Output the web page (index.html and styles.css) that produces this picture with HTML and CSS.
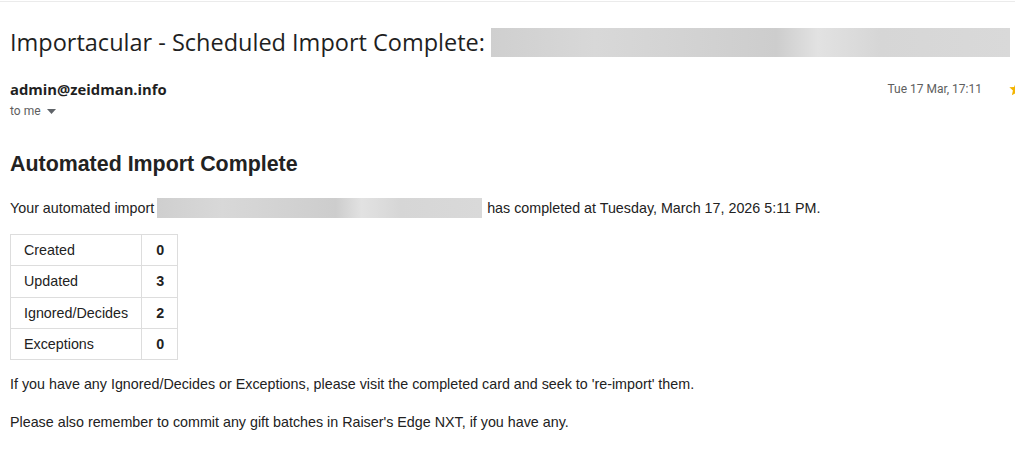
FILE: index.html
```html
<!DOCTYPE html>
<html>
<head>
<meta charset="utf-8">
<link rel="stylesheet" href="styles.css">
</head>
<body>
<div class="topline"></div>
<div class="subject">
  <h1 class="subject-text">Importacular - Scheduled Import Complete:</h1>
  <div class="redact redact-subject"></div>
</div>
<div class="sender-row">
  <div class="sender">
    <div class="from">admin@zeidman.info</div>
    <div class="tome">to me <svg class="caret" width="9" height="5" viewBox="0 0 9 5"><path d="M0 0h9L4.5 5z" fill="#5f6368"/></svg></div>
  </div>
  <div class="meta">
    <span class="date">Tue 17 Mar, 17:11</span>
    <svg class="star" width="16" height="16" viewBox="0 0 24 24"><path d="M12 2l2.9 6.9 7.1.6-5.4 4.7 1.6 7.3L12 17.8 5.8 21.5l1.6-7.3L2 9.5l7.1-.6z" fill="#f4b400"/></svg>
  </div>
</div>
<div class="mail">
  <h2 class="mail-title">Automated Import Complete</h2>
  <p class="line first">Your automated import<span class="redact redact-inline"></span>has completed at Tuesday, March 17, 2026 5:11 PM.</p>
  <table class="stats">
    <tr><td class="label">Created</td><td class="num">0</td></tr>
    <tr><td class="label">Updated</td><td class="num">3</td></tr>
    <tr><td class="label">Ignored/Decides</td><td class="num">2</td></tr>
    <tr><td class="label">Exceptions</td><td class="num">0</td></tr>
  </table>
  <p class="line note">If you have any Ignored/Decides or Exceptions, please visit the completed card and seek to 're-import' them.</p>
  <p class="line note2">Please also remember to commit any gift batches in Raiser's Edge NXT, if you have any.</p>
</div>
</body>
</html>
```
FILE: styles.css
```css
html, body {
  margin: 0;
  padding: 0;
  background: #fff;
}
body {
  width: 1015px;
  height: 466px;
  overflow: hidden;
  font-family: Roboto, "Liberation Sans", sans-serif;
}
.topline {
  height: 1px;
  margin-top: 1px;
  background: #ebebeb;
}
.subject {
  display: flex;
  align-items: center;
  padding: 25px 5px 0 10px;
  height: 30px;
}
.subject-text {
  margin: 0;
  font-family: "Open Sans", Roboto, sans-serif;
  font-weight: 400;
  font-size: 23.5px;
  color: #1f1f1f;
  white-space: nowrap;
}
.redact {
  background: linear-gradient(90deg, #cfcfcf 0%, #d8d8d8 20%, #d2d2d2 40%, #cdcdcd 55%, #e2e2e2 63%, #d6d6d6 75%, #d9d9d9 100%);
}
.redact-subject {
  margin-left: 6px;
  flex: 1;
  height: 29px;
}
.sender-row {
  display: flex;
  justify-content: space-between;
  align-items: flex-start;
  padding: 22px 0 0 10px;
}
.from {
  font-family: "Open Sans", Roboto, sans-serif;
  font-weight: 700;
  font-size: 14.8px;
  color: #1f1f1f;
  line-height: 20px;
}
.tome {
  font-size: 12px;
  color: #5e5e5e;
  line-height: 20px;
  margin-top: 2px;
}
.caret {
  margin-left: 3px;
  vertical-align: middle;
}
.meta {
  display: flex;
  align-items: center;
  gap: 26px;
  margin-right: -9px;
  line-height: 20px;
}
.date {
  font-size: 12px;
  color: #5e5e5e;
}
.star {
  display: block;
}
.mail {
  padding: 31px 10px 0 10px;
  font-family: Arial, "Liberation Sans", sans-serif;
  color: #222;
}
.mail-title {
  margin: 0;
  font-size: 21.4px;
  font-weight: 700;
  line-height: 24px;
  color: #222;
}
.line {
  margin: 0;
  font-size: 14.3px;
  line-height: 20px;
}
.first {
  margin-top: 22px;
}
.redact-inline {
  display: inline-block;
  width: 325px;
  height: 20px;
  margin: 0 5px 0 3px;
  vertical-align: -5px;
}
.stats {
  border-collapse: collapse;
  margin-top: 16px;
  font-size: 14.3px;
}
.stats td {
  border: 1px solid #ddd;
  height: 31.25px;
  padding: 0 13px;
  box-sizing: border-box;
}
.stats .num {
  font-weight: 700;
  padding: 0 13px 0 14px;
}
.note {
  margin-top: 14px;
}
.note2 {
  margin-top: 18px;
}
```
